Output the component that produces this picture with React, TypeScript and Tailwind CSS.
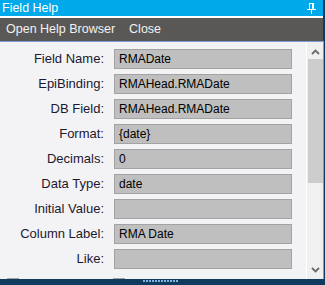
import React from "react"

const fields = [
	{ label: "Field Name:", value: "RMADate" },
	{ label: "EpiBinding:", value: "RMAHead.RMADate" },
	{ label: "DB Field:", value: "RMAHead.RMADate" },
	{ label: "Format:", value: "{date}" },
	{ label: "Decimals:", value: "0" },
	{ label: "Data Type:", value: "date" },
	{ label: "Initial Value:", value: "" },
	{ label: "Column Label:", value: "RMA Date" },
	{ label: "Like:", value: "" },
]

const PinIcon = () => (
	<svg width="9" height="11" viewBox="0 0 9 11" fill="white">
		<rect x="2" y="0" width="5" height="1" />
		<rect x="2" y="0" width="1" height="6" />
		<rect x="5" y="0" width="2" height="6" />
		<rect x="0" y="6" width="9" height="1" />
		<rect x="4" y="7" width="1" height="4" />
	</svg>
)

const Chevron = ({ up }: { up?: boolean }) => (
	<svg width="9" height="6" viewBox="0 0 9 6">
		<path
			d={up ? "M1 5 L4.5 1.5 L8 5" : "M1 1 L4.5 4.5 L8 1"}
			stroke="#6a6a6a"
			strokeWidth="1.8"
			fill="none"
		/>
	</svg>
)

export default function App() {
	return (
		<div
			className="w-[325px] h-[285px] flex flex-col overflow-hidden bg-[#0f3b5f]"
			style={{ fontFamily: '"Liberation Sans", Arial, sans-serif' }}
		>
			{/* title bar */}
			<div className="h-[16px] flex items-center justify-between bg-[#00a9ea] mr-[2px] pl-[2px] pr-[7px]">
				<span className="text-white text-[12.5px] leading-none">Field Help</span>
				<PinIcon />
			</div>
			<div className="h-[2px] bg-white mr-[2px]" />
			{/* menu */}
			<div className="h-[23px] flex items-center gap-[14px] bg-[#595856] pl-[6px] mr-[2px] text-[12.5px] text-[#f2f2f2]">
				<span>Open Help Browser</span>
				<span>Close</span>
			</div>
			{/* body */}
			<div className="h-[238px] flex border-t border-r border-[#7c9ad6] bg-[#f3f3f5] mr-[1px]">
				<div className="flex-1 overflow-hidden pt-[7px] border-r border-white">
					<div className="flex flex-col gap-[5px]">
						{fields.map((f) => (
							<div key={f.label} className="flex items-center">
								<div className="w-[105px] text-right text-[13px] text-[#1c1830] pr-[1px]">
									{f.label}
								</div>
								<div className="ml-[9px] w-[178px] h-[20px] border border-[#a3a3a3] bg-[#bfbfbf] flex items-center px-[4px] text-[12px] text-black">
									{f.value}
								</div>
							</div>
						))}
					</div>
					<div className="flex items-center mt-[6px] text-[12px] text-[#333]">
						<div className="ml-[7px] w-[12px] h-[12px] border border-[#a0a0a0] bg-white" />
						<span className="ml-[8px]">Mandatory</span>
						<div className="ml-[29px] w-[12px] h-[12px] border border-[#a0a0a0] bg-white" />
						<span className="ml-[8px]">System Flag</span>
					</div>
				</div>
				<div className="w-[16px] flex flex-col items-center bg-[#f0f0f0]">
					<div className="h-[17px] flex items-center justify-center pt-[2px]">
						<Chevron up />
					</div>
					<div className="w-[15px] h-[124px] bg-[#cdcdcd]" />
					<div className="flex-1" />
					<div className="h-[17px] flex items-center justify-center pb-[2px]">
						<Chevron />
					</div>
				</div>
			</div>
			{/* bottom grip */}
			<div className="flex-1 flex justify-center items-start pt-[1px] pr-[4px]">
				<div className="flex gap-[1px]">
					{Array.from({ length: 12 }).map((_, i) => (
						<div key={i} className="w-[2px] h-[2px] bg-[#7fb3e6]" />
					))}
				</div>
			</div>
		</div>
	)
}
